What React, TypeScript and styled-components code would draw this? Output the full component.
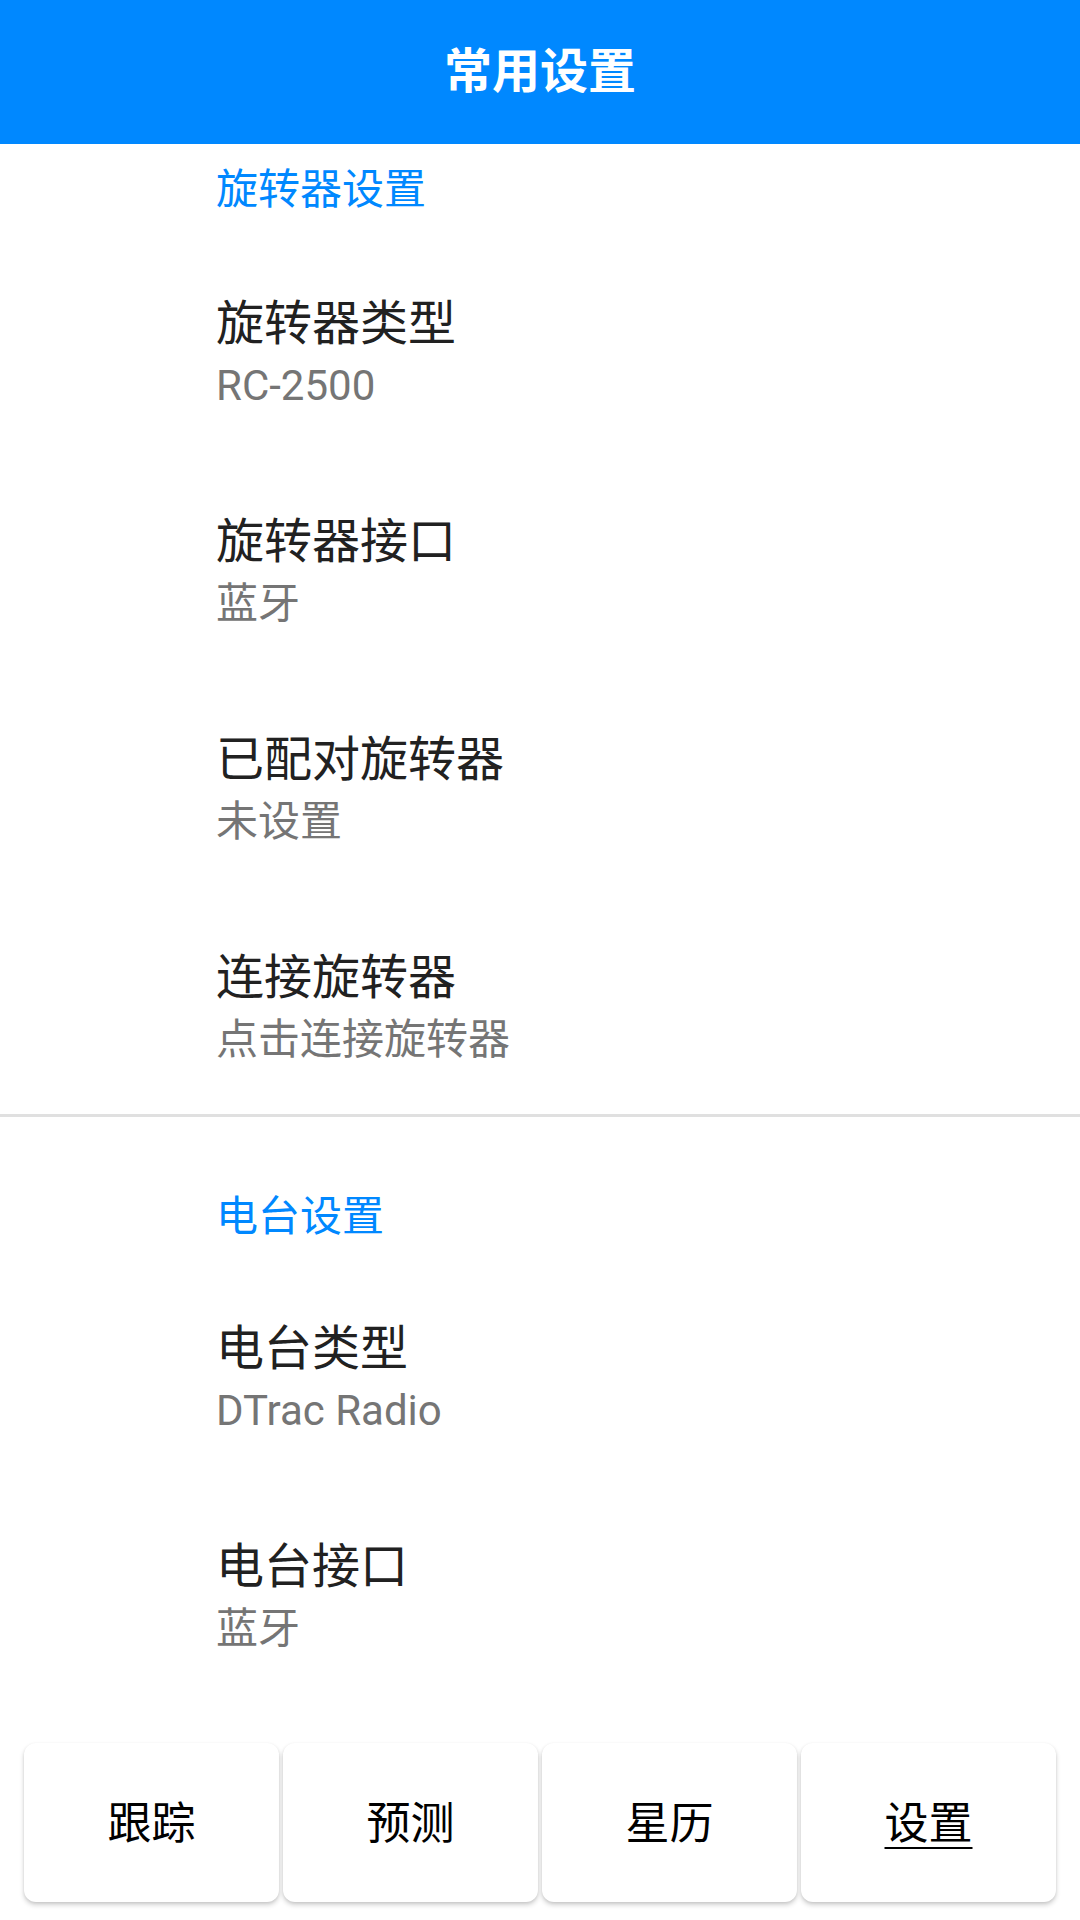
import { FC } from 'react';
import styled, { createGlobalStyle } from 'styled-components';

const GlobalStyle = createGlobalStyle`
html, body{
    margin: 0;
    padding: 0;
    background: #ffffff;
}
body{
    font-family: Roboto, "Noto Sans CJK SC", sans-serif;
}
`;

const Screen = styled.div`
width: 1080px;
height: 1920px;
display: flex;
flex-direction: column;
background: #ffffff;
overflow: hidden;
`;

const TopBar = styled.header`
height: 144px;
flex-shrink: 0;
background-color: #0088ff;
display: flex;
align-items: center;
justify-content: center;

h1{
    margin: 0;
    color: #ffffff;
    font-size: 48px;
    font-weight: 700;
    line-height: 1;
}
`;

const List = styled.div`
flex: 1;
overflow: hidden;
display: flex;
flex-direction: column;
`;

const Category = styled.div<{ $first?: boolean }>`
padding: ${p => (p.$first ? '18px 0 24px' : '72px 0 22px')} 216px;
color: #0088ff;
font-size: 42px;
line-height: 56px;
`;

const Divider = styled.div`
height: 3px;
background-color: #e0e0e0;
`;

const Item = styled.div`
height: 218px;
box-sizing: border-box;
padding: 8px 0 0 216px;
display: flex;
flex-direction: column;
justify-content: center;

.title{
    color: #212121;
    font-size: 48px;
    line-height: 62px;
}
.summary{
    color: #757575;
    font-size: 42px;
    line-height: 62px;
}
`;

const NavBar = styled.nav`
flex-shrink: 0;
padding: 37px 24px 18px;
display: grid;
grid-template-columns: repeat(4, 1fr);
gap: 4px;
`;

const NavButton = styled.button<{ $active?: boolean }>`
height: 159px;
border: none;
border-radius: 12px;
background: #ffffff;
box-shadow: 0 3px 5px rgba(0,0,0,0.18), 0 1px 3px rgba(0,0,0,0.08);
font-family: "Noto Sans CJK SC", sans-serif;
font-size: 44px;
color: #000000;
text-decoration: ${p => (p.$active ? 'underline' : 'none')};
text-decoration-thickness: 2px;
text-underline-offset: 8px;
padding: 0 0 5px;
`;

interface Pref {
    title: string;
    summary: string;
}

const rotatorPrefs: Pref[] = [
    { title: '旋转器类型', summary: 'RC-2500' },
    { title: '旋转器接口', summary: '蓝牙' },
    { title: '已配对旋转器', summary: '未设置' },
    { title: '连接旋转器', summary: '点击连接旋转器' },
];

const radioPrefs: Pref[] = [
    { title: '电台类型', summary: 'DTrac Radio' },
    { title: '电台接口', summary: '蓝牙' },
];

const tabs = ['跟踪', '预测', '星历', '设置'];

const PrefRow: FC<Pref> = ({ title, summary }) => (
    <Item>
        <span className="title">{title}</span>
        <span className="summary">{summary}</span>
    </Item>
);

export default function App() {
    return (
        <Screen>
            <GlobalStyle />
            <TopBar>
                <h1>常用设置</h1>
            </TopBar>
            <List>
                <Category $first>旋转器设置</Category>
                {rotatorPrefs.map(p => (
                    <PrefRow key={p.title} {...p} />
                ))}
                <Divider />
                <Category>电台设置</Category>
                {radioPrefs.map(p => (
                    <PrefRow key={p.title} {...p} />
                ))}
            </List>
            <NavBar>
                {tabs.map(t => (
                    <NavButton key={t} $active={t === '设置'}>{t}</NavButton>
                ))}
            </NavBar>
        </Screen>
    );
}
